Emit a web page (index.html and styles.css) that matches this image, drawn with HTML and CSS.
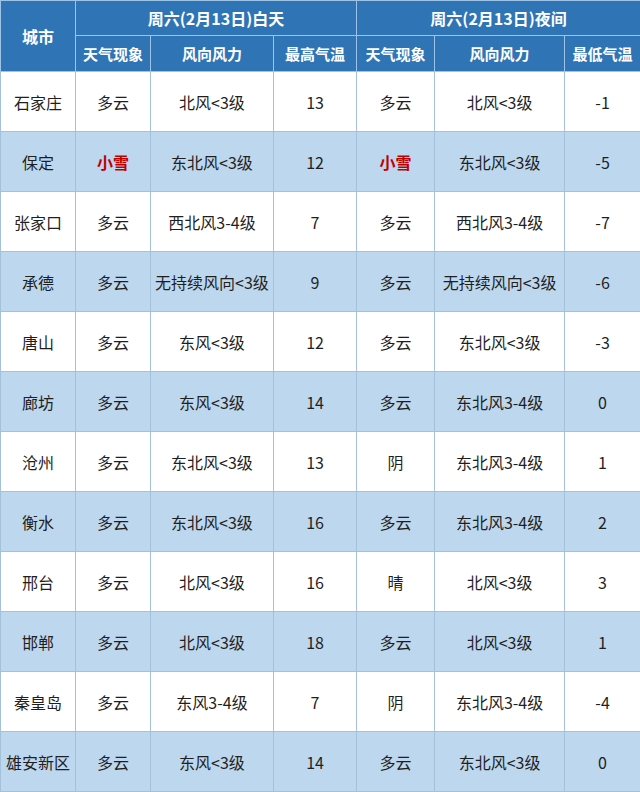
FILE: index.html
```html
<!DOCTYPE html>
<html lang="zh">
<head>
<meta charset="utf-8">
<title>河北天气预报</title>
<link rel="stylesheet" href="styles.css">
</head>
<body>
<table class="wx">
  <colgroup>
    <col class="c1"><col class="c2"><col class="c3"><col class="c4"><col class="c5"><col class="c6"><col class="c7">
  </colgroup>
  <thead>
    <tr class="h1">
      <th rowspan="2">城市</th>
      <th colspan="3">周六(2月13日)白天</th>
      <th colspan="3">周六(2月13日)夜间</th>
    </tr>
    <tr class="h2">
      <th>天气现象</th><th>风向风力</th><th>最高气温</th>
      <th>天气现象</th><th>风向风力</th><th>最低气温</th>
    </tr>
  </thead>
  <tbody>
    <tr><td>石家庄</td><td>多云</td><td>北风&lt;3级</td><td>13</td><td>多云</td><td>北风&lt;3级</td><td>-1</td></tr>
    <tr><td>保定</td><td class="snow">小雪</td><td>东北风&lt;3级</td><td>12</td><td class="snow">小雪</td><td>东北风&lt;3级</td><td>-5</td></tr>
    <tr><td>张家口</td><td>多云</td><td>西北风3-4级</td><td>7</td><td>多云</td><td>西北风3-4级</td><td>-7</td></tr>
    <tr><td>承德</td><td>多云</td><td>无持续风向&lt;3级</td><td>9</td><td>多云</td><td>无持续风向&lt;3级</td><td>-6</td></tr>
    <tr><td>唐山</td><td>多云</td><td>东风&lt;3级</td><td>12</td><td>多云</td><td>东北风&lt;3级</td><td>-3</td></tr>
    <tr><td>廊坊</td><td>多云</td><td>东风&lt;3级</td><td>14</td><td>多云</td><td>东北风3-4级</td><td>0</td></tr>
    <tr><td>沧州</td><td>多云</td><td>东北风&lt;3级</td><td>13</td><td>阴</td><td>东北风3-4级</td><td>1</td></tr>
    <tr><td>衡水</td><td>多云</td><td>东北风&lt;3级</td><td>16</td><td>多云</td><td>东北风3-4级</td><td>2</td></tr>
    <tr><td>邢台</td><td>多云</td><td>北风&lt;3级</td><td>16</td><td>晴</td><td>北风&lt;3级</td><td>3</td></tr>
    <tr><td>邯郸</td><td>多云</td><td>北风&lt;3级</td><td>18</td><td>多云</td><td>北风&lt;3级</td><td>1</td></tr>
    <tr><td>秦皇岛</td><td>多云</td><td>东风3-4级</td><td>7</td><td>阴</td><td>东北风3-4级</td><td>-4</td></tr>
    <tr><td>雄安新区</td><td>多云</td><td>东风&lt;3级</td><td>14</td><td>多云</td><td>东北风&lt;3级</td><td>0</td></tr>
  </tbody>
</table>
</body>
</html>
```

FILE: styles.css
```css
html, body {
  margin: 0;
  padding: 0;
  background: #ffffff;
}

.wx {
  width: 640px;
  border-collapse: collapse;
  table-layout: fixed;
  font-family: "Microsoft YaHei", "Noto Sans CJK SC", "Noto Sans", sans-serif;
  font-size: 16px;
  color: #1f1f1f;
}

.c1 { width: 75px; }
.c2 { width: 75px; }
.c3 { width: 123px; }
.c4 { width: 83px; }
.c5 { width: 78px; }
.c6 { width: 130px; }
.c7 { width: 76px; }

.wx th {
  background: #2f75b5;
  color: #ffffff;
  font-weight: bold;
  font-size: 15px;
  border: 1px solid #9dc3e6;
  padding: 0;
  text-align: center;
  vertical-align: middle;
}

.h1 th {
  height: 34px;
  font-size: 16px;
}

.h2 th {
  height: 35px;
}

.wx td {
  height: 59px;
  padding: 0;
  text-align: center;
  vertical-align: middle;
  border: 1px solid #a3c2da;
  white-space: nowrap;
}

.wx tbody tr:nth-child(odd) td {
  background: #ffffff;
}

.wx tbody tr:nth-child(even) td {
  background: #bdd7ee;
}

.wx td.snow {
  color: #c00000;
  font-weight: bold;
}
```
